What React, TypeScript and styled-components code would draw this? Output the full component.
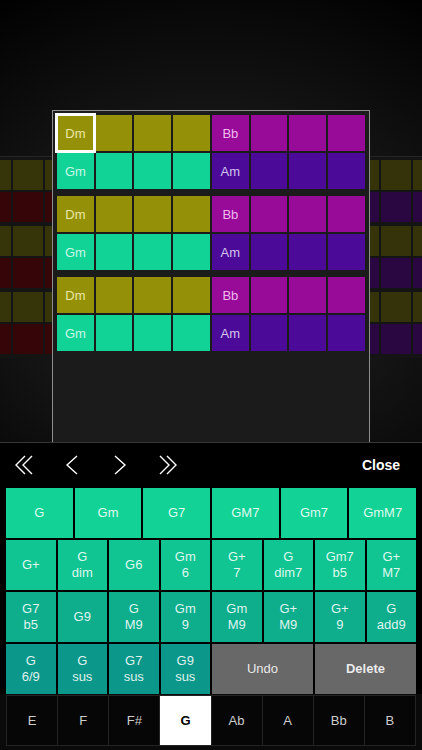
import React from "react";
import styled, { createGlobalStyle } from "styled-components";

const GlobalStyle = createGlobalStyle`
  html, body {
    margin: 0;
    padding: 0;
    background: #000;
  }
  body {
    font-family: "Liberation Sans", Arial, sans-serif;
    -webkit-font-smoothing: antialiased;
  }
`;

const Screen = styled.div`
  width: 422px;
  height: 750px;
  display: flex;
  flex-direction: column;
  overflow: hidden;
  background: #000;
`;

const Stage = styled.div`
  height: 442px;
  flex-shrink: 0;
  display: flex;
  align-items: flex-start;
  overflow: hidden;
  background: radial-gradient(
    ellipse 95% 75% at 50% 62%,
    #202020 0%,
    #161616 45%,
    #0a0a0a 75%,
    #000 100%
  );
  border-bottom: 1px solid #363636;
`;

const SideStrip = styled.div`
  width: 53px;
  margin-top: 157px;
  overflow: hidden;
  background: #141414;
  padding: 3px 0 2px;
  box-shadow: 0 -1px 0 #262626;
`;

const StripGrid = styled.div<{ $shift: number }>`
  display: grid;
  grid-template-columns: repeat(3, 30px);
  gap: 2px;
  margin-left: ${(p) => p.$shift}px;
  width: 94px;
`;

const StripCell = styled.div<{ $bg: string; $gapAfter?: boolean }>`
  height: 30px;
  background: ${(p) => p.$bg};
  margin-bottom: ${(p) => (p.$gapAfter ? "2px" : "0")};
`;

const Panel = styled.div`
  width: 314px;
  height: 331px;
  margin-top: 110px;
  border: 1px solid #8e8e8e;
  border-bottom: none;
  background: #1b1b1b;
  padding: 4px 4px 0;
  box-sizing: content-box;
  display: flex;
  flex-direction: column;
  gap: 7px;
  position: relative;
  z-index: 1;
`;

const PadPair = styled.div`
  display: flex;
  flex-direction: column;
  gap: 2px;
`;

const PadRow = styled.div`
  display: grid;
  grid-template-columns: repeat(8, 1fr);
  gap: 2px;
  height: 36px;
`;

const Pad = styled.div<{ $bg: string; $selected?: boolean; $ink: string }>`
  background: ${(p) => p.$bg};
  color: ${(p) => p.$ink};
  font-size: 13px;
  display: flex;
  align-items: center;
  justify-content: center;
  outline: ${(p) => (p.$selected ? "3px solid #fff" : "none")};
  outline-offset: -1px;
  position: relative;
  z-index: ${(p) => (p.$selected ? 2 : 0)};
`;

const Toolbar = styled.div`
  height: 44px;
  flex-shrink: 0;
  display: flex;
  align-items: center;
  background: #000;
  padding-right: 22px;
`;

const NavGroup = styled.div`
  display: flex;
  flex: 1;
`;

const NavButton = styled.button`
  width: 48px;
  height: 44px;
  background: none;
  border: none;
  padding: 0;
  display: flex;
  align-items: center;
  justify-content: center;
  cursor: pointer;
`;

const CloseButton = styled.button`
  background: none;
  border: none;
  padding: 0;
  color: #fff;
  font-family: "Liberation Sans", Arial, sans-serif;
  font-weight: 700;
  font-size: 14px;
  cursor: pointer;
`;

const ChordArea = styled.div`
  flex-shrink: 0;
  display: flex;
  flex-direction: column;
  gap: 2px;
  padding: 1px 6px 0;
  background: #000;
`;

const ChordRow = styled.div<{ $cols: number }>`
  display: grid;
  grid-template-columns: repeat(${(p) => p.$cols}, 1fr);
  gap: 2px;
  height: 50px;
`;

const ChordButton = styled.button<{ $bg: string; $span?: number; $bold?: boolean }>`
  grid-column: span ${(p) => p.$span ?? 1};
  background: ${(p) => p.$bg};
  border: none;
  padding: 0;
  color: rgba(255, 255, 255, 0.88);
  font-family: "Liberation Sans", Arial, sans-serif;
  font-size: 13px;
  font-weight: ${(p) => (p.$bold ? 700 : 400)};
  line-height: 16px;
  display: flex;
  flex-direction: column;
  align-items: center;
  justify-content: center;
  white-space: nowrap;
`;

const KeyBar = styled.div`
  padding: 1px 6px 0;
  background: #0a0a0a;
  flex: 1;
`;

const KeyRow = styled.div`
  display: grid;
  grid-template-columns: repeat(8, 1fr);
  gap: 1px;
  height: 51px;
  box-sizing: border-box;
  background: #242424;
  border: 1px solid #242424;
`;

const Key = styled.div<{ $active?: boolean }>`
  background: ${(p) => (p.$active ? "#fff" : "#060606")};
  color: ${(p) => (p.$active ? "#000" : "#cdcdcd")};
  font-weight: ${(p) => (p.$active ? 700 : 400)};
  font-size: 13px;
  display: flex;
  align-items: center;
  justify-content: center;
`;

const OLIVE = "#949108";
const TEAL = "#11d396";
const MAGENTA = "#980a98";
const PURPLE = "#4b0a98";

const pairs = [0, 1, 2];

const DoubleChevron = ({ flip }: { flip?: boolean }) => (
  <svg width="20" height="20" viewBox="0 0 20 20" style={flip ? { transform: "scaleX(-1)" } : undefined}>
    <path d="M11 1 L2 10 L11 19 M18 1 L9 10 L18 19" fill="none" stroke="#fff" strokeWidth="1.4" />
  </svg>
);

const Chevron = ({ flip }: { flip?: boolean }) => (
  <svg width="14" height="20" viewBox="0 0 14 20" style={flip ? { transform: "scaleX(-1)" } : undefined}>
    <path d="M12 1 L2 10 L12 19" fill="none" stroke="#fff" strokeWidth="1.4" />
  </svg>
);

const chordRow1 = ["G", "Gm", "G7", "GM7", "Gm7", "GmM7"];
const chordRow2 = [["G+"], ["G", "dim"], ["G6"], ["Gm", "6"], ["G+", "7"], ["G", "dim7"], ["Gm7", "b5"], ["G+", "M7"]];
const chordRow3 = [["G7", "b5"], ["G9"], ["G", "M9"], ["Gm", "9"], ["Gm", "M9"], ["G+", "M9"], ["G+", "9"], ["G", "add9"]];
const chordRow4 = [["G", "6/9"], ["G", "sus"], ["G7", "sus"], ["G9", "sus"]];

const keys = ["E", "F", "F#", "G", "Ab", "A", "Bb", "B"];

const Label = ({ lines }: { lines: string[] }) => (
  <>
    {lines.map((l) => (
      <span key={l}>{l}</span>
    ))}
  </>
);

const stripRows = (top: string, bottom: string) =>
  pairs.flatMap((i) => [
    ...[0, 1, 2].map((c) => <StripCell key={`t${i}${c}`} $bg={top} />),
    ...[0, 1, 2].map((c) => <StripCell key={`b${i}${c}`} $bg={bottom} $gapAfter />),
  ]);

const App = () => {
  return (
    <>
      <GlobalStyle />
      <Screen>
        <Stage>
          <SideStrip>
            <StripGrid $shift={-19}>{stripRows("#36350a", "#360508")}</StripGrid>
          </SideStrip>
          <Panel>
            {pairs.map((i) => (
              <PadPair key={i}>
                <PadRow>
                  {[0, 1, 2, 3].map((c) => (
                    <Pad key={c} $bg={OLIVE} $ink="#ebe7a6" $selected={i === 0 && c === 0}>
                      {c === 0 ? "Dm" : ""}
                    </Pad>
                  ))}
                  {[0, 1, 2, 3].map((c) => (
                    <Pad key={`m${c}`} $bg={MAGENTA} $ink="#f0b8ef">
                      {c === 0 ? "Bb" : ""}
                    </Pad>
                  ))}
                </PadRow>
                <PadRow>
                  {[0, 1, 2, 3].map((c) => (
                    <Pad key={c} $bg={TEAL} $ink="#c9f6e6">
                      {c === 0 ? "Gm" : ""}
                    </Pad>
                  ))}
                  {[0, 1, 2, 3].map((c) => (
                    <Pad key={`p${c}`} $bg={PURPLE} $ink="#d2c4f0">
                      {c === 0 ? "Am" : ""}
                    </Pad>
                  ))}
                </PadRow>
              </PadPair>
            ))}
          </Panel>
          <SideStrip>
            <StripGrid $shift={-21}>{stripRows("#34330a", "#2a0740")}</StripGrid>
          </SideStrip>
        </Stage>

        <Toolbar>
          <NavGroup>
            <NavButton aria-label="first">
              <DoubleChevron />
            </NavButton>
            <NavButton aria-label="previous">
              <Chevron />
            </NavButton>
            <NavButton aria-label="next">
              <Chevron flip />
            </NavButton>
            <NavButton aria-label="last">
              <DoubleChevron flip />
            </NavButton>
          </NavGroup>
          <CloseButton>Close</CloseButton>
        </Toolbar>

        <ChordArea>
          <ChordRow $cols={6}>
            {chordRow1.map((c) => (
              <ChordButton key={c} $bg="#12d295">
                {c}
              </ChordButton>
            ))}
          </ChordRow>
          <ChordRow $cols={8}>
            {chordRow2.map((c) => (
              <ChordButton key={c.join()} $bg="#10c592">
                <Label lines={c} />
              </ChordButton>
            ))}
          </ChordRow>
          <ChordRow $cols={8}>
            {chordRow3.map((c) => (
              <ChordButton key={c.join()} $bg="#0eae8d">
                <Label lines={c} />
              </ChordButton>
            ))}
          </ChordRow>
          <ChordRow $cols={8}>
            {chordRow4.map((c) => (
              <ChordButton key={c.join()} $bg="#0b988a">
                <Label lines={c} />
              </ChordButton>
            ))}
            <ChordButton $bg="#686868" $span={2}>
              Undo
            </ChordButton>
            <ChordButton $bg="#686868" $span={2} $bold>
              Delete
            </ChordButton>
          </ChordRow>
        </ChordArea>

        <KeyBar>
          <KeyRow>
            {keys.map((k) => (
              <Key key={k} $active={k === "G"}>
                {k}
              </Key>
            ))}
          </KeyRow>
        </KeyBar>
      </Screen>
    </>
  );
};

export default App;
